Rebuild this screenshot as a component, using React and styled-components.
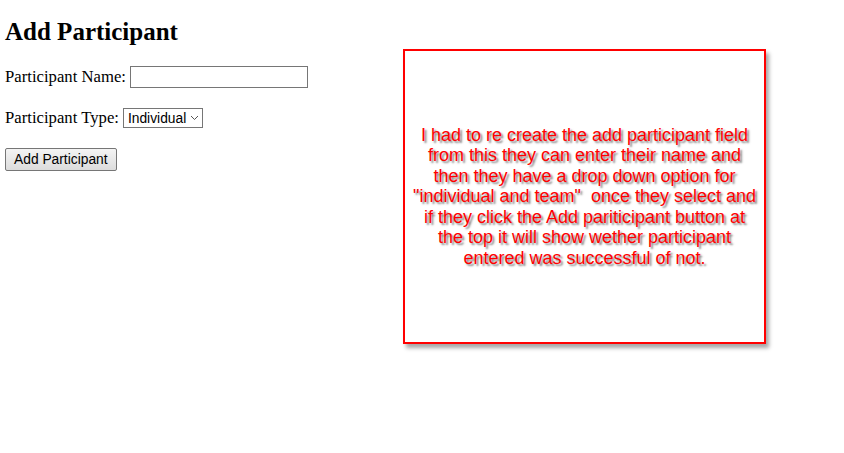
import React from "react";
import styled, { createGlobalStyle } from "styled-components";

const Global = createGlobalStyle`
  html, body { margin: 0; padding: 0; background: #fff; }
  body { font-family: "Liberation Serif", "Times New Roman", serif; font-size: 16px; color: #000; }
`;

const Page = styled.div`
  position: relative;
  width: 844px;
  height: 453px;
  padding: 0 5px;
  box-sizing: border-box;
`;

const Title = styled.h2`
  margin: 0;
  padding-top: 18px;
  font-size: 25px;
  line-height: 28px;
  font-weight: bold;
`;

const Form = styled.form`
  display: flex;
  flex-direction: column;
  align-items: flex-start;
  margin-top: 20px;
  gap: 19px;
`;

const Row = styled.div`
  display: flex;
  align-items: center;
  gap: 4px;
  height: 22px;
`;

const Label = styled.label`
  font-size: 16.7px;
  line-height: 18px;
`;

const TextInput = styled.input`
  width: 178px;
  height: 22px;
  box-sizing: border-box;
  border: 1px solid #767676;
  border-radius: 0;
  padding: 1px 2px;
  font-family: "Liberation Sans", Arial, sans-serif;
  font-size: 13.33px;
  outline: none;
`;

const Select = styled.div`
  display: flex;
  align-items: center;
  gap: 4px;
  height: 20px;
  box-sizing: border-box;
  border: 1px solid #767676;
  padding: 0 3px 0 4px;
  font-family: "Liberation Sans", Arial, sans-serif;
  font-size: 13.8px;
  color: #000;
  background: #fff;
`;

const Button = styled.button`
  height: 23px;
  box-sizing: border-box;
  padding: 1px 8px;
  border: 1px solid #767676;
  border-radius: 2px;
  background: linear-gradient(#f4f4f4, #dcdcdc);
  font-family: "Liberation Sans", Arial, sans-serif;
  font-size: 13.8px;
  color: #000;
`;

const Note = styled.div`
  position: absolute;
  left: 403px;
  top: 49px;
  width: 363px;
  height: 295px;
  box-sizing: border-box;
  border: 2px solid #ff0000;
  background: #fff;
  box-shadow: 3px 4px 4px rgba(0, 0, 0, 0.35);
  display: flex;
  align-items: center;
  justify-content: center;
  padding: 0 2px;
`;

const NoteText = styled.p`
  margin: 0;
  text-align: center;
  white-space: nowrap;
  color: #ff0000;
  font-family: "Liberation Sans", Arial, sans-serif;
  font-size: 18px;
  line-height: 20.5px;
  text-shadow: 2px 2px 2px rgba(90, 90, 90, 0.75);
`;

const lines = [
  "I had to re create the add participant field",
  "from this they can enter their name and",
  "then they have a drop down option for",
  "\"individual and team\"\u00a0 once they select and",
  "if they click the Add pariticipant button at",
  "the top it will show wether participant",
  "entered was successful of not.",
];

export default function App() {
  return (
    <>
      <Global />
      <Page>
        <Title>Add Participant</Title>
        <Form onSubmit={(e) => e.preventDefault()}>
          <Row>
            <Label>Participant Name:</Label>
            <TextInput type="text" />
          </Row>
          <Row>
            <Label>Participant Type:</Label>
            <Select>
              <span>Individual</span>
              <svg width="9" height="6" viewBox="0 0 9 6">
                <path d="M1 1 L4.5 4.5 L8 1" fill="none" stroke="#555" strokeWidth="1" />
              </svg>
            </Select>
          </Row>
          <Button type="submit">Add Participant</Button>
        </Form>
        <Note>
          <NoteText>
            {lines.map((l, i) => (
              <React.Fragment key={i}>
                {l}
                {i < lines.length - 1 && <br />}
              </React.Fragment>
            ))}
          </NoteText>
        </Note>
      </Page>
    </>
  );
}
